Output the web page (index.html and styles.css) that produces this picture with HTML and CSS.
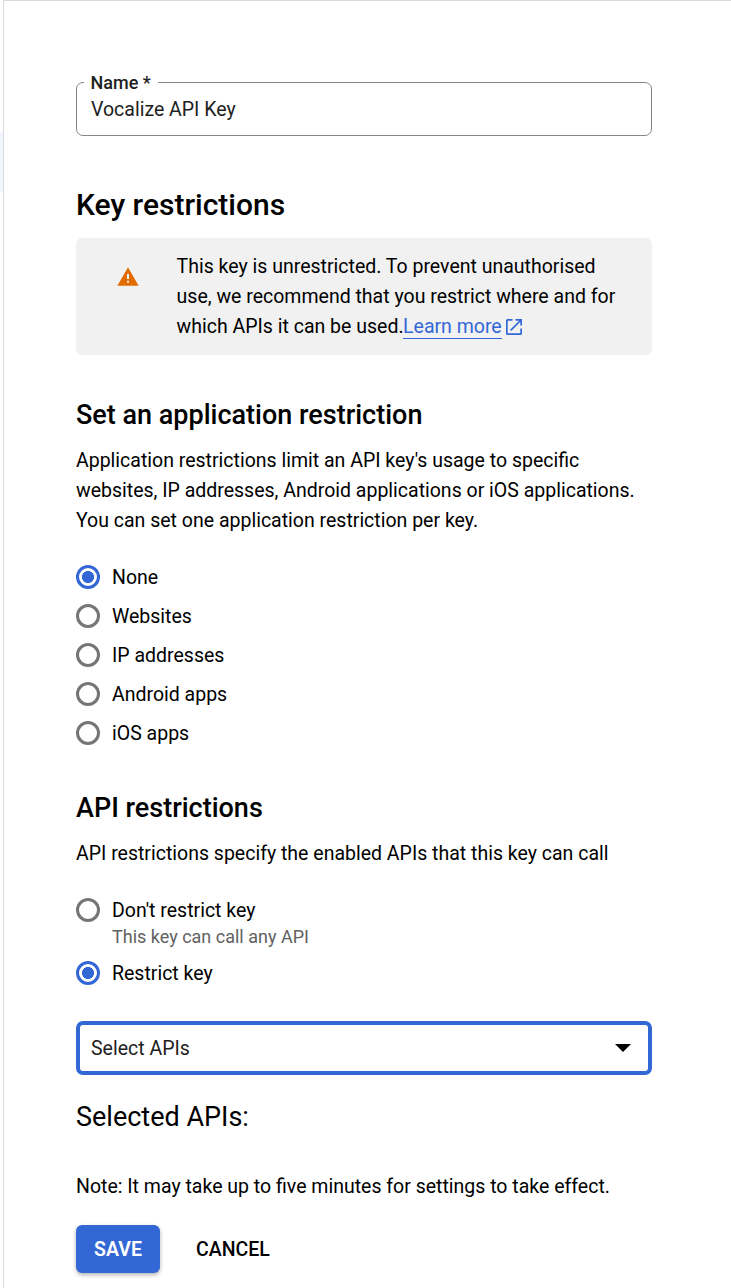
FILE: index.html
```html
<!DOCTYPE html>
<html lang="en">
<head>
<meta charset="utf-8">
<title>Edit API key</title>
<link rel="stylesheet" href="styles.css">
</head>
<body>
<div class="shell">
  <aside class="rail"><div class="rail-active"></div></aside>
  <main class="panel">
    <div class="field">
      <span class="field-label">Name *</span>
      <span class="field-value">Vocalize API Key</span>
    </div>

    <h1 class="title">Key restrictions</h1>
    <div class="notice">
      <svg class="warning" viewBox="0 0 22 19"><path d="M11 .2 21.6 18.7H.4z" fill="#e06c00"/><path d="M10 7h2v5h-2zM10 13.8h2v2h-2z" fill="#f1f1f1"/></svg>
      <p class="notice-text">This key is unrestricted. To prevent unauthorised<br>use, we recommend that you restrict where and for<br>which APIs it can be used.<a class="link">Learn more</a><svg class="external" viewBox="0 0 16 16"><path d="M6.5 .85H1.6Q.85 .85 .85 1.6v12.8q0 .75.75.75h12.8q.75 0 .75-.75V9.5M9.5 .85h5.65V6.5M15 1 4.7 11.3" fill="none" stroke="#3367d6" stroke-width="1.7"/></svg></p>
    </div>

    <h2 class="heading">Set an application restriction</h2>
    <p class="copy">Application restrictions limit an API key's usage to specific<br>websites, IP addresses, Android applications or iOS applications.<br>You can set one application restriction per key.</p>
    <div class="options">
      <div class="option"><span class="radio radio-on"></span><span class="option-text">None</span></div>
      <div class="option"><span class="radio"></span><span class="option-text">Websites</span></div>
      <div class="option"><span class="radio"></span><span class="option-text">IP addresses</span></div>
      <div class="option"><span class="radio"></span><span class="option-text">Android apps</span></div>
      <div class="option"><span class="radio"></span><span class="option-text">iOS apps</span></div>
    </div>

    <h2 class="heading">API restrictions</h2>
    <p class="copy">API restrictions specify the enabled APIs that this key can call</p>
    <div class="options">
      <div class="option"><span class="radio"></span><span class="option-text">Don't restrict key</span></div>
      <p class="hint">This key can call any API</p>
      <div class="option"><span class="radio radio-on"></span><span class="option-text">Restrict key</span></div>
    </div>

    <div class="select">
      <span class="option-text">Select APIs</span>
      <svg class="caret" viewBox="0 0 16 8"><path d="M0 0h16L8 8z"/></svg>
    </div>
    <h3 class="selected">Selected APIs:</h3>
    <p class="copy note">Note: It may take up to five minutes for settings to take effect.</p>
    <div class="actions">
      <button class="button button-save">SAVE</button>
      <button class="button button-cancel">CANCEL</button>
    </div>
  </main>
</div>
</body>
</html>
```

FILE: styles.css
```css
* { box-sizing: border-box; margin: 0; padding: 0; }
body {
  background: #fff;
  color: #000;
  font: 400 19.5px/30px Roboto, sans-serif;
  overflow: hidden;
}
.shell { display: flex; height: 1288px; }
.rail { width: 3px; padding-top: 132px; }
.rail-active { height: 60px; background: #f0f5fe; }
.panel {
  flex: 1;
  border-top: 1px solid #dadada;
  border-left: 1px solid #dadada;
  padding: 81px 79px 0 72px;
  white-space: nowrap;
}
.field {
  position: relative;
  height: 54px;
  border: 1px solid #80868b;
  border-radius: 7px;
  padding: 12px 14px;
  color: #212121;
}
.field-label {
  position: absolute;
  top: -15px;
  left: 7px;
  padding: 0 7.5px 0 6.5px;
  background: #fff;
  font-size: 18px;
  font-weight: 500;
}
.title { margin-top: 49px; font-size: 30px; font-weight: 500; line-height: 40px; }
.notice {
  display: flex;
  height: 117px;
  margin-top: 13px;
  padding: 14px 0 0 41px;
  border-radius: 6px;
  background: #f1f1f1;
}
.warning { width: 22px; height: 19px; margin: 15px 37.6px 0 0; }
.link { margin-left: -.5px; color: #3367d6; border-bottom: 1px solid #3367d6; }
.external { width: 16px; height: 16px; margin-left: 4.4px; vertical-align: -2px; }
.heading { margin-top: 42px; font-size: 27px; font-weight: 500; line-height: 36px; }
.copy { margin-top: 13px; }
.options { margin-top: 26px; }
.option { display: flex; align-items: center; gap: 12px; height: 30px; }
.option + .option { margin-top: 9px; }
.option-text { padding-top: 2px; }
.radio { width: 24px; height: 24px; border: 3px solid #757575; border-radius: 50%; }
.radio-on {
  border-color: #3367d6;
  background: radial-gradient(circle, #3367d6 5.7px, transparent 6.3px);
}
.hint {
  height: 33px;
  padding-left: 36px;
  color: #616161;
  font-size: 18px;
  line-height: 24px;
}
.select {
  display: flex;
  align-items: center;
  justify-content: space-between;
  height: 54px;
  margin-top: 33px;
  padding: 0 17px 0 11px;
  border: 4px solid #3367d6;
  border-radius: 7px;
  color: #212121;
}
.caret { width: 16px; height: 8px; }
.selected { margin-top: 24px; font-size: 27px; font-weight: 400; line-height: 36px; }
.note { margin-top: 37px; }
.actions { display: flex; gap: 18px; margin-top: 23px; }
.button {
  height: 48px;
  padding: 1px 18px 0;
  border: 0;
  border-radius: 6px;
  background: transparent;
  font: 500 19.5px/47px Roboto, sans-serif;
}
.button-save {
  width: 84px;
  padding: 1px 0 0;
  background: #3367d6;
  color: #fff;
  font-weight: 600;
  box-shadow: 0 2px 4px rgba(0, 0, 0, .3);
}
```
